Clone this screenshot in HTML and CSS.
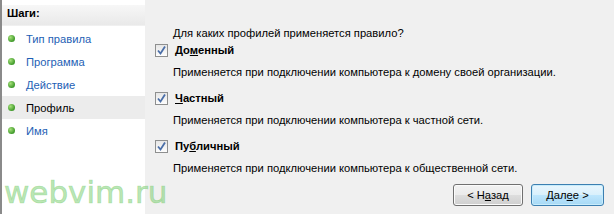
FILE: index.html
```html
<!DOCTYPE html>
<html>
<head>
<meta charset="utf-8">
<link rel="stylesheet" href="styles.css">
</head>
<body>
<div class="window">
  <aside class="sidebar">
    <div class="steps-head">Шаги:</div>
    <ul class="steps">
      <li class="step"><span class="dot"></span><span class="link">Тип правила</span></li>
      <li class="step"><span class="dot"></span><span class="link">Программа</span></li>
      <li class="step"><span class="dot"></span><span class="link">Действие</span></li>
      <li class="step current"><span class="dot"></span><span>Профиль</span></li>
      <li class="step"><span class="dot"></span><span class="link">Имя</span></li>
    </ul>
  </aside>
  <main class="content">
    <p class="question">Для каких профилей применяется правило?</p>
    <div class="option first">
      <span class="check"><svg width="11" height="11" viewBox="0 0 11 11"><path d="M2 5.5 L4.5 8.5 L9 1.5" fill="none" stroke="#4a6ea8" stroke-width="1.8"/></svg></span>
      <span class="label">До<u>м</u>енный</span>
    </div>
    <p class="desc">Применяется при подключении компьютера к домену своей организации.</p>
    <div class="option">
      <span class="check"><svg width="11" height="11" viewBox="0 0 11 11"><path d="M2 5.5 L4.5 8.5 L9 1.5" fill="none" stroke="#4a6ea8" stroke-width="1.8"/></svg></span>
      <span class="label"><u>Ч</u>астный</span>
    </div>
    <p class="desc">Применяется при подключении компьютера к частной сети.</p>
    <div class="option">
      <span class="check"><svg width="11" height="11" viewBox="0 0 11 11"><path d="M2 5.5 L4.5 8.5 L9 1.5" fill="none" stroke="#4a6ea8" stroke-width="1.8"/></svg></span>
      <span class="label">Пу<u>б</u>личный</span>
    </div>
    <p class="desc">Применяется при подключении компьютера к общественной сети.</p>
    <div class="buttons">
      <button class="btn">&lt; Н<u>а</u>зад</button>
      <button class="btn default">Дал<u>е</u>е &gt;</button>
    </div>
  </main>
  <div class="watermark">webvim.ru</div>
</div>
</body>
</html>
```

FILE: styles.css
```css
html, body {
  margin: 0;
  padding: 0;
}
body {
  width: 614px;
  height: 214px;
  overflow: hidden;
  font-family: "Liberation Sans", Arial, sans-serif;
  font-size: 11.2px;
  color: #000;
  background: #f0f0f0;
}
.window {
  position: relative;
  display: flex;
  width: 614px;
  height: 214px;
}
.sidebar {
  width: 143px;
  flex: none;
  background: #fff;
  border-left: 2px solid #8a8a8a;
  padding-top: 5px;
}
.steps-head {
  height: 20px;
  line-height: 17px;
  padding-left: 5px;
  font-weight: bold;
  background: linear-gradient(#f7f7f7, #e9e9e9);
  border-bottom: 1px solid #f0f0f0;
}
.steps {
  list-style: none;
  margin: 1px 0 0 0;
  padding: 0;
}
.step {
  display: flex;
  align-items: center;
  height: 23px;
  padding-left: 6px;
  gap: 11px;
}
.step.current {
  background: #ececec;
}
.dot {
  width: 7px;
  height: 7px;
  border-radius: 50%;
  background: radial-gradient(circle at 35% 35%, #a6e07a, #3f9a2a 70%, #2e7d1e);
}
.link {
  color: #1e5fb5;
}
.content {
  flex: 1;
  padding: 25px 10px 0 10px;
  display: flex;
  flex-direction: column;
}
.question {
  margin: 0 0 0 18px;
  line-height: 16px;
}
.option {
  display: flex;
  align-items: center;
  height: 16px;
  margin-top: 10px;
  gap: 7px;
}
.option.first {
  margin-top: 1px;
}
.check {
  width: 11px;
  height: 11px;
  border: 1px solid #8e8f8f;
  background: linear-gradient(#e6e6e6, #fdfdfd);
  display: flex;
  align-items: center;
  justify-content: center;
}
.label {
  font-weight: bold;
}
.desc {
  margin: 6px 0 0 18px;
  line-height: 16px;
}
.buttons {
  display: flex;
  justify-content: flex-end;
  gap: 8px;
  margin-top: 8px;
}
.btn {
  width: 70px;
  height: 22px;
  padding: 0;
  font-family: "Liberation Sans", Arial, sans-serif;
  font-size: 11.2px;
  color: #000;
  border: 1px solid #707070;
  border-radius: 3px;
  background: linear-gradient(#f2f2f2 0%, #ebebeb 50%, #dddddd 51%, #cfcfcf 100%);
  box-shadow: inset 0 0 0 1px #fbfbfb;
}
.btn.default {
  width: 73px;
  border-color: #3c7fb1;
  background: linear-gradient(#e9f6fd 0%, #d9f0fc 50%, #bee6fd 51%, #a7d9f5 100%);
  box-shadow: inset 0 0 0 1px #c8ecfb;
}
.watermark {
  position: absolute;
  left: 4px;
  top: 174px;
  font-family: "DejaVu Sans", Verdana, sans-serif;
  font-size: 31px;
  line-height: 36px;
  color: rgba(120, 205, 110, 0.5);
  -webkit-text-stroke: 0.7px rgba(120, 205, 110, 0.5);
  pointer-events: none;
}
```
